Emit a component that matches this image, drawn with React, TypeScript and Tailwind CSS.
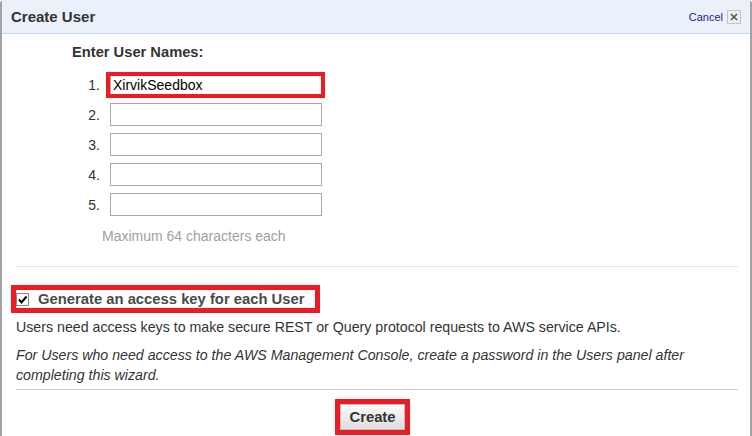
import React from "react";

function NumberRow({ n, value, highlight }: { n: number; value?: string; highlight?: boolean }) {
  return (
    <div className="flex items-center h-[23px]">
      <div className="w-[108px] text-right pr-[10px] text-[14px] leading-[16px] text-[#333]">{n}.</div>
      <div className="relative w-[212px] h-[23px] border border-[#a9a9a9] bg-white flex items-center pl-[2px]">
        {highlight && (
          <div className="absolute left-[-5px] right-[-4px] top-[-2px] bottom-[-3px] border-[4px] border-[#ed1c24]" />
        )}
        <span className="relative text-[14px] leading-[16px] text-black">{value}</span>
      </div>
    </div>
  );
}

export default function App() {
  return (
    <div className="w-[752px] h-[436px] bg-white overflow-hidden font-['Liberation_Sans',Arial,sans-serif]">
      <div className="h-full border-l-2 border-r-2 border-[#a2a2aa] rounded-t-[4px] flex flex-col">
        <div className="h-[34px] shrink-0 bg-[#eaf1fb] border-b border-[#c5d9f1] flex items-center justify-between pl-[9px] pr-[9px]">
          <span className="text-[15px] font-bold text-[#333] leading-[18px]">Create User</span>
          <div className="flex items-center gap-[4px] pt-[1px]">
            <span className="text-[11px] leading-[14px] text-[#1c1c7c]">Cancel</span>
            <span className="w-[14px] h-[14px] border border-[#c4c4c4] bg-[#efefef] flex items-center justify-center">
              <svg width="8" height="8" viewBox="0 0 8 8">
                <path d="M1 1 L7 7 M7 1 L1 7" stroke="#555" strokeWidth="1.6" />
              </svg>
            </span>
          </div>
        </div>

        <div className="flex flex-col">
          <div className="mt-[10px] pl-[70px] text-[14.7px] font-bold leading-[16px] text-[#333]">Enter User Names:</div>
          <div className="mt-[13px] flex flex-col gap-[7px]">
            <NumberRow n={1} value="XirvikSeedbox" highlight />
            <NumberRow n={2} />
            <NumberRow n={3} />
            <NumberRow n={4} />
            <NumberRow n={5} />
          </div>
          <div className="mt-[12px] pl-[100px] text-[14px] leading-[16px] text-[#a0a0a0]">Maximum 64 characters each</div>
          <div className="mt-[22px] ml-[14px] mr-[12px] h-px bg-[#e6e6e6]" />

          <div className="mt-[18px] ml-[9px] self-start border-[5px] border-[#ed1c24] w-[309px] h-[28px] flex items-center">
            <span className="ml-0 w-[13px] h-[13px] border border-[#8a8a8a] bg-white flex items-center justify-center">
              <svg width="11" height="11" viewBox="0 0 11 11">
                <path d="M2 5.5 L4.5 8.5 L9.5 2.5" stroke="#000" strokeWidth="2" fill="none" />
              </svg>
            </span>
            <span className="ml-[9px] text-[14.8px] font-bold leading-[16px] text-[#4a4a4a] whitespace-nowrap">Generate an access key for each User</span>
          </div>

          <div className="mt-[4px] pl-[14px] text-[14.2px] leading-[20px] text-[#333]">
            Users need access keys to make secure REST or Query protocol requests to AWS service APIs.
          </div>
          <div className="mt-[8px] pl-[14px] pr-[30px] text-[14.2px] leading-[20px] italic text-[#333]">
            For Users who need access to the AWS Management Console, create a password in the Users panel after completing this wizard.
          </div>
          <div className="mt-[4px] ml-[14px] mr-[12px] h-px bg-[#cccccc]" />

          <div className="mt-[9px] flex justify-center">
            <div className="mr-[7px] border-[5px] border-[#ed1c24] w-[75px] h-[36px] flex">
              <button className="flex-1 border border-[#bdbdbd] bg-gradient-to-b from-[#fafafa] to-[#dedede] text-[14.8px] font-bold text-[#333] leading-[16px] pb-[1px]">
                Create
              </button>
            </div>
          </div>
        </div>
      </div>
    </div>
  );
}
